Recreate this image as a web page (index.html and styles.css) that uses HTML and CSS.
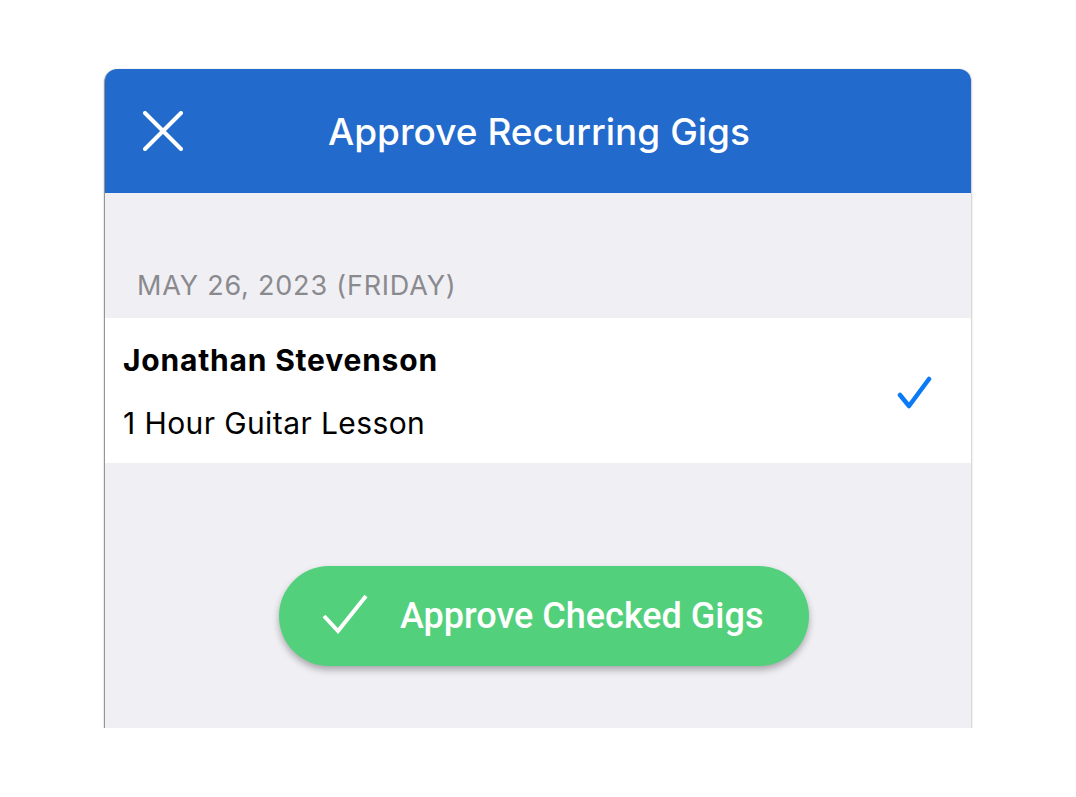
FILE: index.html
```html
<!DOCTYPE html>
<html>
<head>
<meta charset="utf-8">
<link rel="stylesheet" href="styles.css">
</head>
<body>
<div class="card">
  <header class="header">
    <button class="close" aria-label="Close">
      <svg width="40" height="40" viewBox="0 0 40 40"><path d="M2 2 L38 38 M38 2 L2 38" stroke="#fff" stroke-width="4" stroke-linecap="round" fill="none"/></svg>
    </button>
    <h1 class="title">Approve Recurring Gigs</h1>
  </header>
  <div class="section-label">MAY 26, 2023 (FRIDAY)</div>
  <div class="row">
    <div class="row-text">
      <div class="name">Jonathan Stevenson</div>
      <div class="sub">1 Hour Guitar Lesson</div>
    </div>
    <svg class="row-check" width="36" height="34" viewBox="0 0 36 34"><path d="M3 19 L12 30 L32 3" stroke="#0A7AF5" stroke-width="4.5" stroke-linecap="round" stroke-linejoin="round" fill="none"/></svg>
  </div>
  <div class="actions">
    <button class="approve">
      <svg width="46" height="40" viewBox="0 0 46 40"><path d="M2 22 L16 37 L44 2" stroke="#fff" stroke-width="4" stroke-linecap="butt" stroke-linejoin="miter" fill="none"/></svg>
      <span>Approve Checked Gigs</span>
    </button>
  </div>
</div>
</body>
</html>
```
FILE: styles.css
```css
html, body {
  margin: 0;
  padding: 0;
  background: #ffffff;
}
body {
  padding: 69px 105px 0 105px;
  font-family: "Inter", "Roboto", "Liberation Sans", sans-serif;
}
.card {
  width: 866px;
  background: #f0eff4;
  border-radius: 12px 12px 0 0;
  box-shadow: -1px 1px 1px rgba(0,0,0,0.4), 0 1px 3px rgba(0,0,0,0.25), 1px 0 1px rgba(0,0,0,0.08);
  overflow: hidden;
}
.header {
  height: 124px;
  background: #226acb;
  display: flex;
  align-items: center;
  position: relative;
}
.close {
  background: none;
  border: none;
  padding: 0;
  margin-left: 38px;
  width: 40px;
  height: 40px;
  display: flex;
}
.title {
  position: absolute;
  left: 0;
  right: 0;
  margin: 0;
  text-align: center;
  color: #fff;
  font-size: 37px;
  font-weight: 500;
  pointer-events: none;
  padding-left: 2px;
}
.section-label {
  padding: 78px 0 17px 32px;
  line-height: 30px;
  font-size: 27px;
  color: #8a8a8e;
  letter-spacing: 0.8px;
}
.row {
  background: #fff;
  display: flex;
  align-items: center;
  padding: 26px 38px 24px 18px;
}
.row-text {
  flex: 1;
  display: flex;
  flex-direction: column;
  gap: 31px;
}
.name {
  font-size: 30px;
  font-weight: 700;
  line-height: 32px;
  color: #000;
  letter-spacing: 0.8px;
}
.sub {
  font-size: 30px;
  line-height: 32px;
  color: #000;
  letter-spacing: 0.4px;
}
.row-check {
  margin-top: 2px;
}
.actions {
  display: flex;
  justify-content: center;
  padding: 103px 0 62px 0;
}
.approve {
  width: 530px;
  height: 100px;
  margin-left: 12px;
  border: none;
  border-radius: 50px;
  background: #53d07b;
  color: #fff;
  font-family: "Roboto", "Liberation Sans", sans-serif;
  font-size: 36px;
  font-weight: 500;
  display: flex;
  align-items: center;
  gap: 32px;
  padding: 0 0 0 43px;
  box-shadow: 0 4px 7px rgba(0,0,0,0.3);
}
.approve svg {
  margin-top: -4px;
}
```
